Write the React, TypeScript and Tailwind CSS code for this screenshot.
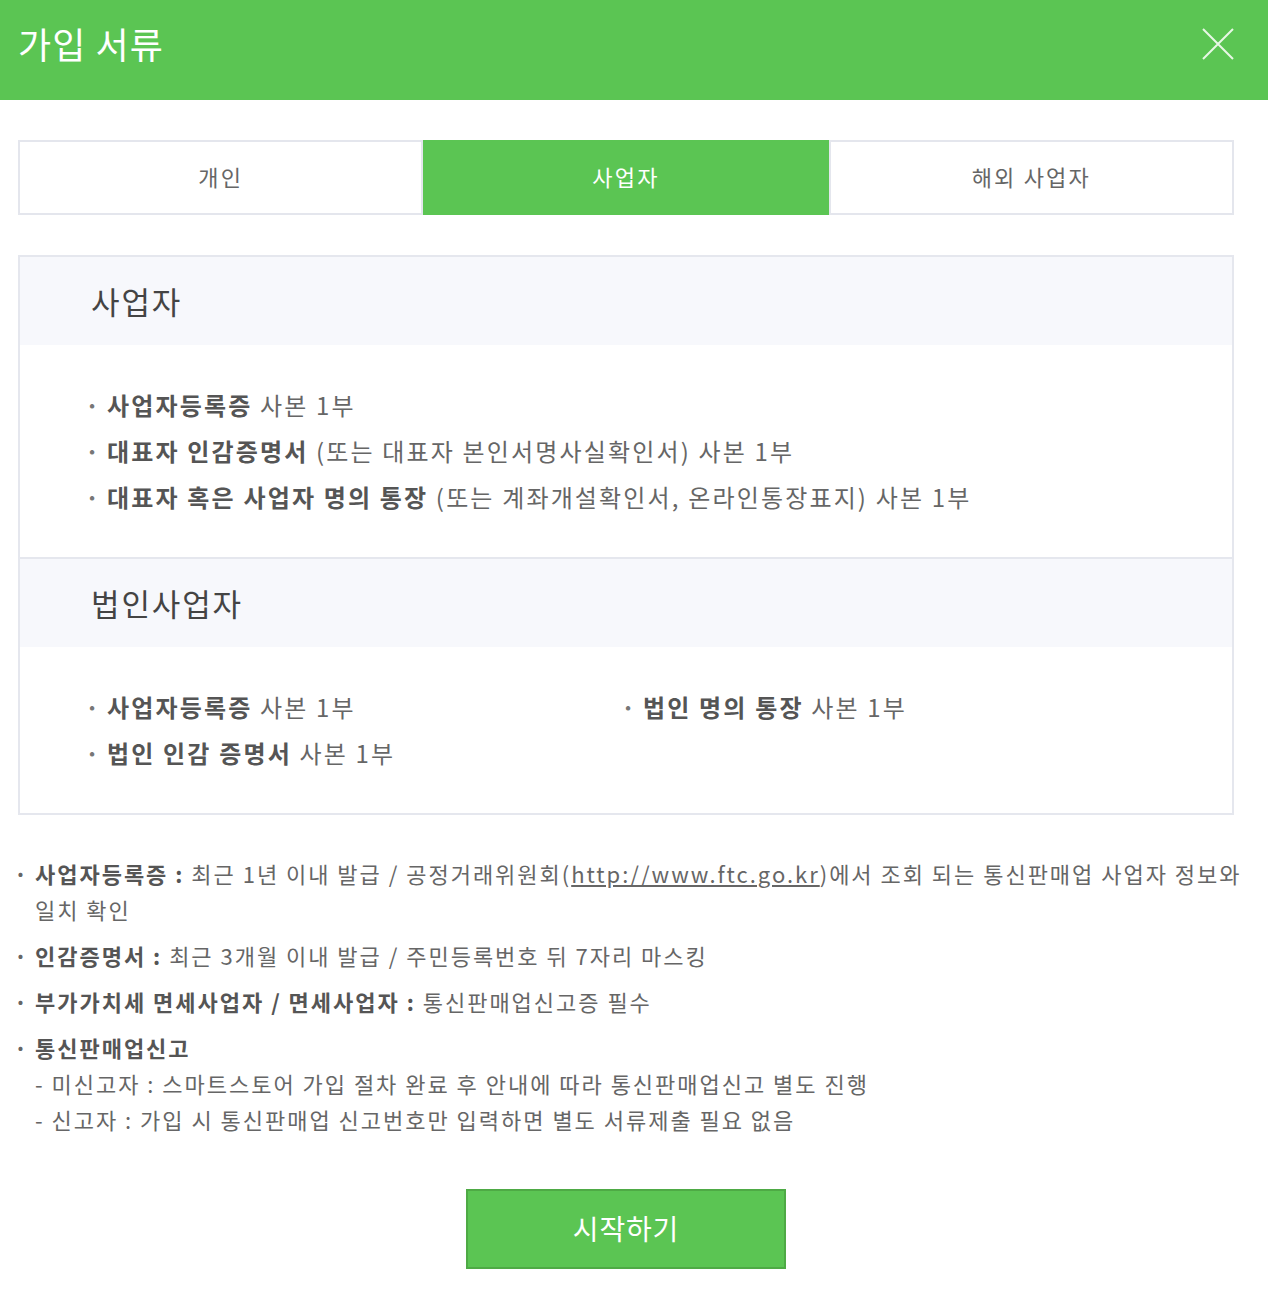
import React from "react";

const font = { fontFamily: '"Noto Sans CJK KR", "Noto Sans", sans-serif' };

function Item({ b, t }: { b: string; t: string }) {
  return (
    <li className="flex h-[46px] items-center whitespace-nowrap tracking-[0.09em]">
      <span className="-ml-[5px] w-[22px] font-bold text-[#777]">·</span>
      <span className="font-bold text-[#555]">{b}</span>
      <span className="text-[#666]">&nbsp;{t}</span>
    </li>
  );
}

export default function App() {
  return (
    <div className="w-[1268px] bg-white pb-[27px]" style={font}>
      <div className="flex h-[100px] items-center justify-between bg-[#5bc553] pl-[18px] pr-[34px]">
        <h1 className="pb-[14px] text-[36px] leading-none tracking-[0.03em] text-white">가입 서류</h1>
        <svg width="32" height="32" viewBox="0 0 32 32" className="mb-[13px]">
          <path d="M1 1L31 31M31 1L1 31" stroke="#e8f7e6" strokeWidth="2" />
        </svg>
      </div>

      <div className="pl-[18px] pr-[34px]">
        <div className="mt-[40px] grid h-[75px] grid-cols-3 text-[22px] tracking-[0.1em]">
          <div className="flex items-center justify-center border-2 border-[#e4e6ed] pb-[2px] text-[#666]">개인</div>
          <div className="flex items-center justify-center bg-[#5bc553] pb-[2px] text-white">사업자</div>
          <div className="flex items-center justify-center border-2 border-[#e4e6ed] pb-[2px] text-[#666]">해외 사업자</div>
        </div>

        <div className="mt-[40px] border-2 border-[#e5e7ee]">
          <div className="flex h-[88px] items-center bg-[#f7f8fc] pl-[71px] text-[31px] tracking-[0.06em] text-[#444]">사업자</div>
          <ul className="px-[70px] py-[37px] text-[24px]">
            <Item b="사업자등록증" t="사본 1부" />
            <Item b="대표자 인감증명서" t="(또는 대표자 본인서명사실확인서) 사본 1부" />
            <Item b="대표자 혹은 사업자 명의 통장" t="(또는 계좌개설확인서, 온라인통장표지) 사본 1부" />
          </ul>
          <div className="flex h-[90px] items-center border-t-2 border-[#e5e7ee] bg-[#f7f8fc] pl-[71px] text-[31px] tracking-[0.06em] text-[#444]">법인사업자</div>
          <div className="grid grid-cols-[536px_1fr] px-[70px] py-[37px] text-[24px]">
            <ul>
              <Item b="사업자등록증" t="사본 1부" />
              <Item b="법인 인감 증명서" t="사본 1부" />
            </ul>
            <ul>
              <Item b="법인 명의 통장" t="사본 1부" />
            </ul>
          </div>
        </div>
      </div>

      <ul className="mt-[40px] flex flex-col gap-[10px] pl-[14px] pr-[8px] text-[22px] leading-[36px] tracking-[0.09em] text-[#666]">
        <li className="flex">
          <span className="w-[21px] shrink-0 font-bold">·</span>
          <span>
            <b className="text-[#555]">사업자등록증 :</b> 최근 1년 이내 발급 / 공정거래위원회(<span className="underline">http://www.ftc.go.kr</span>)에서 조회 되는 통신판매업 사업자 정보와
            <br />
            일치 확인
          </span>
        </li>
        <li className="flex">
          <span className="w-[21px] shrink-0 font-bold">·</span>
          <span>
            <b className="text-[#555]">인감증명서 :</b> 최근 3개월 이내 발급 / 주민등록번호 뒤 7자리 마스킹
          </span>
        </li>
        <li className="flex">
          <span className="w-[21px] shrink-0 font-bold">·</span>
          <span>
            <b className="text-[#555]">부가가치세 면세사업자 / 면세사업자 :</b> 통신판매업신고증 필수
          </span>
        </li>
        <li className="flex">
          <span className="w-[21px] shrink-0 font-bold">·</span>
          <div>
            <b className="text-[#555]">통신판매업신고</b>
            <div>- 미신고자 : 스마트스토어 가입 절차 완료 후 안내에 따라 통신판매업신고 별도 진행</div>
            <div>- 신고자 : 가입 시 통신판매업 신고번호만 입력하면 별도 서류제출 필요 없음</div>
          </div>
        </li>
      </ul>

      <div className="mt-[52px] flex justify-center pr-[16px]">
        <button className="h-[80px] w-[320px] border-2 border-[#4eaa45] bg-[#5bc553] pb-[2px] text-[28px] tracking-[0.03em] text-white">시작하기</button>
      </div>
    </div>
  );
}
